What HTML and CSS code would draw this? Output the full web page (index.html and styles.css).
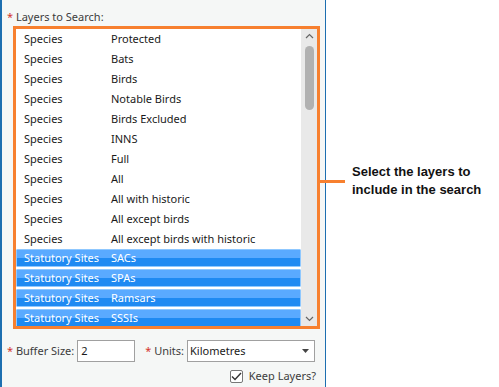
FILE: index.html
```html
<!DOCTYPE html>
<html lang="en">
<head>
  <meta charset="UTF-8">
  <title>Layers to Search</title>
  <link rel="stylesheet" href="styles.css">
</head>
<body>
  <div class="panel">
    <div class="label"><span class="req">*</span> Layers to Search:</div>
    <div class="highlight">
      <div class="listbox">
        <div class="rows">
          <div class="row"><span class="col1">Species</span><span>Protected</span></div>
          <div class="row"><span class="col1">Species</span><span>Bats</span></div>
          <div class="row"><span class="col1">Species</span><span>Birds</span></div>
          <div class="row"><span class="col1">Species</span><span>Notable Birds</span></div>
          <div class="row"><span class="col1">Species</span><span>Birds Excluded</span></div>
          <div class="row"><span class="col1">Species</span><span>INNS</span></div>
          <div class="row"><span class="col1">Species</span><span>Full</span></div>
          <div class="row"><span class="col1">Species</span><span>All</span></div>
          <div class="row"><span class="col1">Species</span><span>All with historic</span></div>
          <div class="row"><span class="col1">Species</span><span>All except birds</span></div>
          <div class="row"><span class="col1">Species</span><span>All except birds with historic</span></div>
          <div class="row selected"><span class="col1">Statutory Sites</span><span>SACs</span></div>
          <div class="row selected"><span class="col1">Statutory Sites</span><span>SPAs</span></div>
          <div class="row selected"><span class="col1">Statutory Sites</span><span>Ramsars</span></div>
          <div class="row selected"><span class="col1">Statutory Sites</span><span>SSSIs</span></div>
        </div>
        <div class="scrollbar">
          <svg class="arrow" width="9" height="6" viewBox="0 0 9 6"><path d="M1 5 L4.5 1.5 L8 5" fill="none" stroke="#666" stroke-width="1.2"/></svg>
          <div class="thumb"></div>
          <div class="track"></div>
          <svg class="arrow" width="9" height="6" viewBox="0 0 9 6"><path d="M1 1 L4.5 4.5 L8 1" fill="none" stroke="#666" stroke-width="1.2"/></svg>
        </div>
      </div>
    </div>

    <div class="options">
      <span class="label"><span class="req">*</span> Buffer Size:</span>
      <div class="textbox">2</div>
      <span class="label units"><span class="req">*</span> Units:</span>
      <div class="select">
        <span>Kilometres</span>
        <svg width="7" height="4" viewBox="0 0 7 4"><path d="M0 0 H7 L3.5 4 Z" fill="#444"/></svg>
      </div>
    </div>
    <div class="keep">
      <span class="checkbox">
        <svg width="11" height="9" viewBox="0 0 11 9"><path d="M1 4.5 L4 7.5 L10 1" fill="none" stroke="#333" stroke-width="1.4"/></svg>
      </span>
      <span class="label">Keep Layers?</span>
    </div>
  </div>

  <div class="connector"></div>
  <div class="note">Select the layers to<br>include in the search</div>
</body>
</html>
```

FILE: styles.css
```css
body {
  margin: 0;
  width: 499px;
  height: 387px;
  background: #fff;
  font-family: "Noto Sans", "Open Sans", sans-serif;
  font-size: 11px;
  color: #1a1a1a;
  position: relative;
  overflow: hidden;
}

.panel {
  width: 326px;
  height: 387px;
  box-sizing: border-box;
  background: #f5f7f6;
  border-left: 2px solid #1d6fb0;
  border-right: 1px solid #1d6fb0;
  padding: 9px 0 0 5px;
}

.label {
  color: #3c3c3c;
  line-height: 16px;
  white-space: nowrap;
  flex: none;
}
.req {
  color: #d4342c;
}

.highlight {
  margin: 1px 0 0 6px;
  width: 307px;
  height: 303px;
  box-sizing: border-box;
  border: 3px solid #f7802f;
  display: flex;
}

.listbox {
  flex: 1;
  display: flex;
  background: #fff;
  overflow: hidden;
}

.rows {
  flex: 1;
}

.row {
  height: 20px;
  line-height: 19px;
  padding-left: 8px;
  display: flex;
  white-space: nowrap;
}
.col1 {
  width: 87px;
}

.row.selected {
  height: 18px;
  box-sizing: border-box;
  line-height: 15px;
  margin: 0 0 2px 0;
  padding-left: 7px;
  border: 1px solid #8fc8ff;
  border-radius: 1px;
  color: #fff;
  background: linear-gradient(#5aaaff 0, #5aaaff 50%, #1f8af2 50%, #1f8af2 100%);
}

.scrollbar {
  width: 16px;
  background: #e9e9e9;
  display: flex;
  flex-direction: column;
  align-items: center;
  padding: 4px 0;
  box-sizing: border-box;
}
.arrow {
  flex: none;
}
.thumb {
  margin-top: 7px;
  width: 9px;
  height: 64px;
  border-radius: 5px;
  background: #b1b1b1;
}
.track {
  flex: 1;
}

.options {
  display: flex;
  align-items: center;
  margin-top: 11px;
}
.textbox {
  flex: none;
  margin-left: 3px;
  width: 58px;
  height: 22px;
  box-sizing: border-box;
  border: 1px solid #a0a0a0;
  background: #fff;
  padding-left: 3px;
  line-height: 20px;
}
.units {
  margin-left: 10px;
}
.select {
  flex: none;
  margin-left: 3px;
  width: 128px;
  height: 22px;
  box-sizing: border-box;
  border: 1px solid #a0a0a0;
  background: #fff;
  padding: 0 5px 0 2px;
  line-height: 20px;
  display: flex;
  justify-content: space-between;
  align-items: center;
}

.keep {
  display: flex;
  align-items: center;
  justify-content: flex-end;
  padding-right: 9px;
  margin-top: 6px;
}
.checkbox {
  width: 13px;
  height: 13px;
  box-sizing: border-box;
  border: 1px solid #777;
  background: #fff;
  border-radius: 2px;
  display: flex;
  align-items: center;
  justify-content: center;
  margin-right: 6px;
}

.connector {
  position: absolute;
  left: 320px;
  top: 180px;
  width: 25px;
  height: 3px;
  background: #f7802f;
}

.note {
  position: absolute;
  left: 352px;
  top: 163px;
  font-family: "Liberation Sans", Arial, sans-serif;
  font-weight: bold;
  font-size: 13px;
  line-height: 18px;
  color: #111;
}
```
